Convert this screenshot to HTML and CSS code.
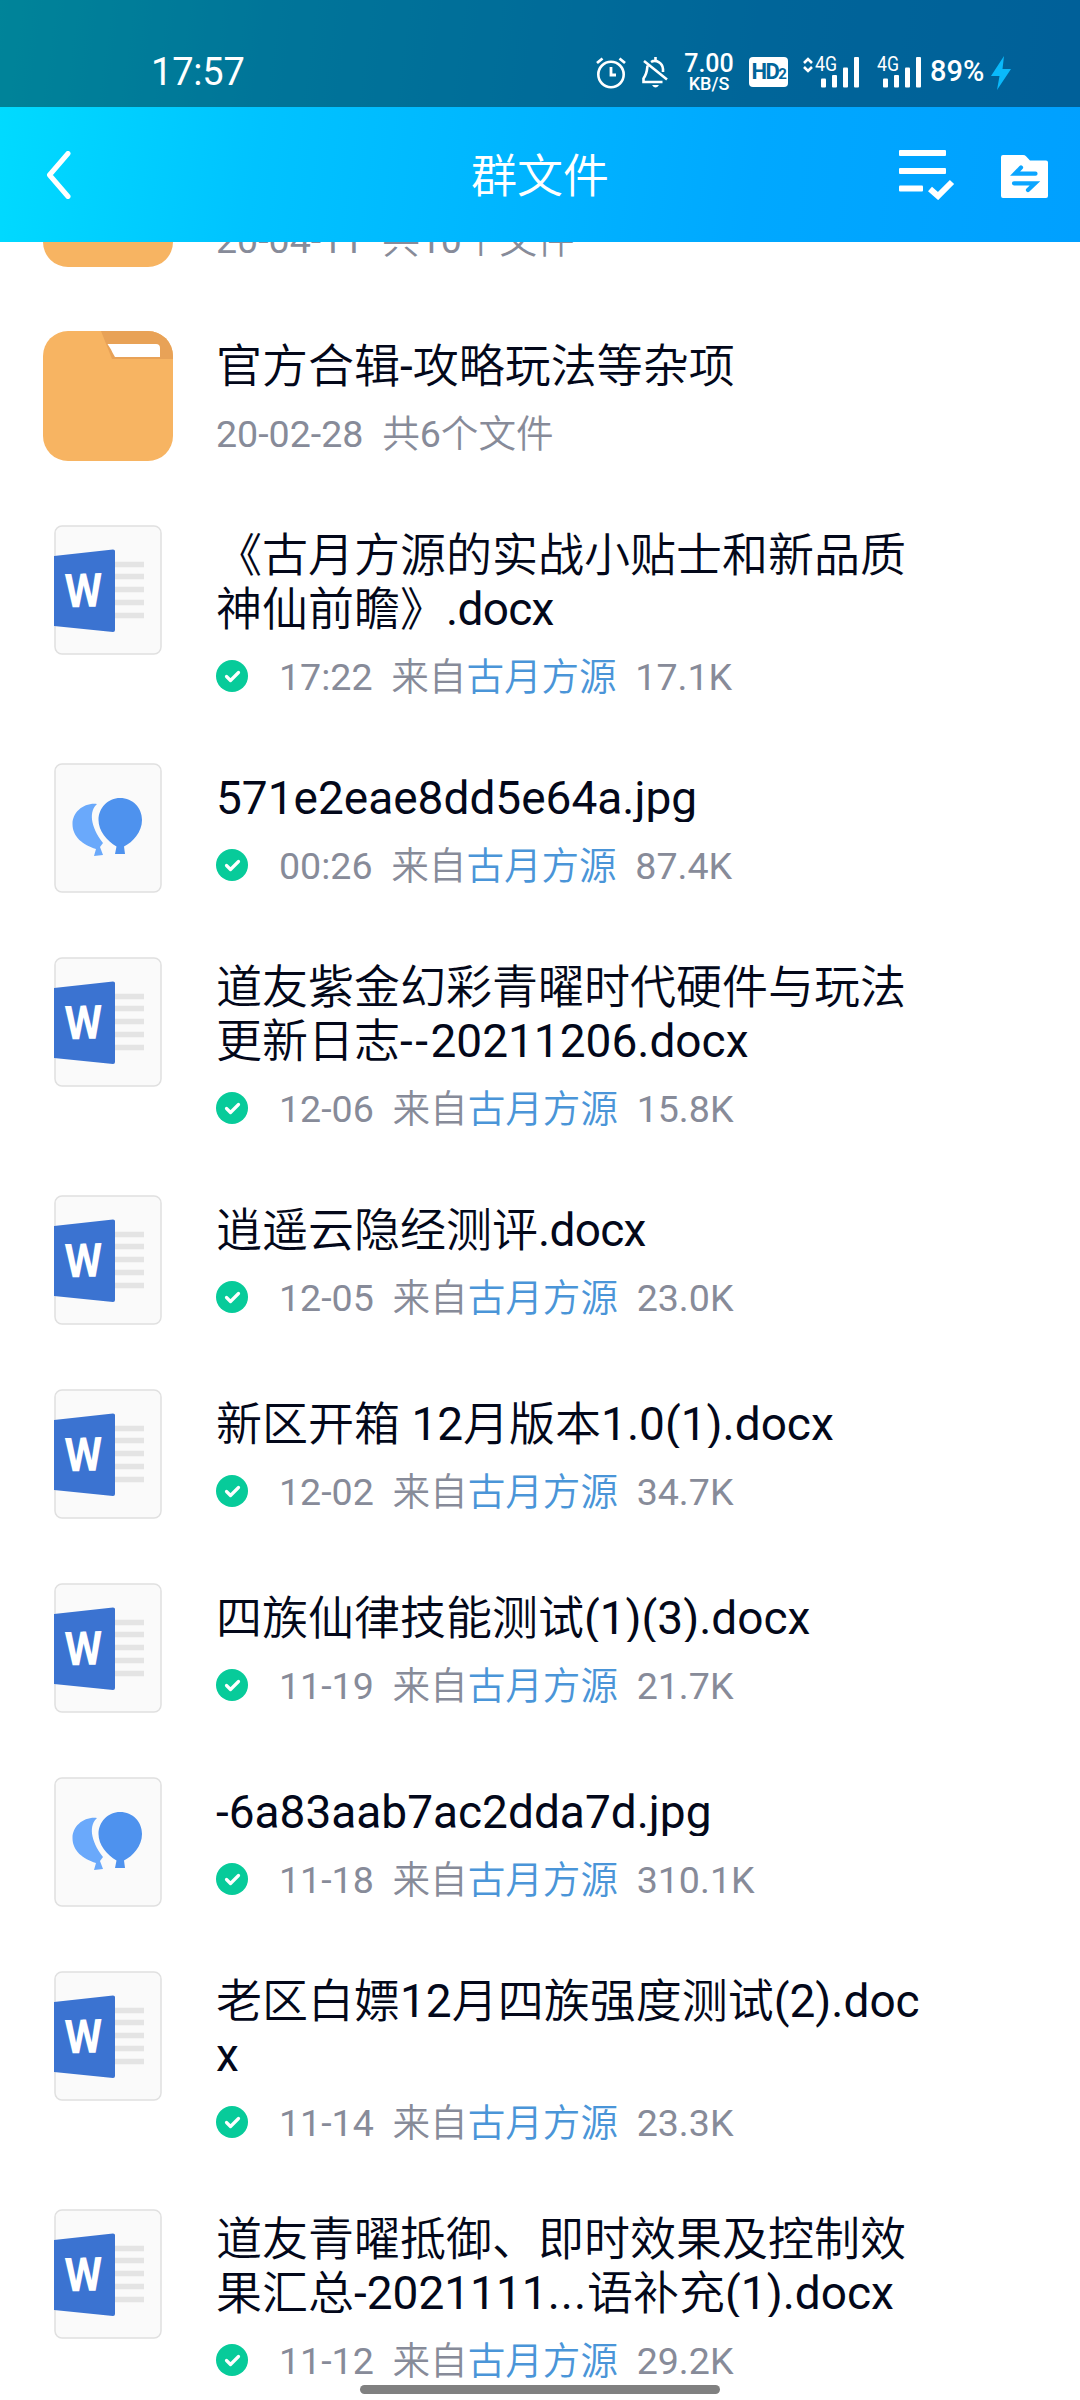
FILE: index.html
```
<!DOCTYPE html>
<html lang="zh-CN">
<head>
<meta charset="utf-8">
<title>群文件</title>
<link rel="stylesheet" href="styles.css">
</head>
<body>
<svg class="defs" width="0" height="0">
  <symbol id="folder" viewBox="0 0 130 130">
    <rect width="130" height="130" rx="25" fill="#f7b462"/>
    <path d="M58 0H105A25 25 0 0 1 130 25V28H69Z" fill="#e8a257"/>
    <path d="M64.500 13H113Q117 13 117 17V26H72Q69.500 22 68 18.500Z" fill="#fff"/>
  </symbol>
  <symbol id="word" viewBox="0 0 108 130">
    <rect x="1" y="1" width="106" height="128" rx="7" fill="#fafafa" stroke="#e0e0e0" stroke-width="1.500"/>
    <path d="M61 39.500h29M61 51.500h29M61 64.500h29M61 77.500h29M61 90.500h29" stroke="#e4e4e4" stroke-width="5.500"/>
    <path d="M0 31L59 24.500Q61 24.500 61 26V105Q61 107 59 107L0 101Z" fill="#3b73d1"/>
    <text class="w" x="10.500" y="82" textLength="38" lengthAdjust="spacingAndGlyphs" transform="rotate(-1.500 30 65)">W</text>
  </symbol>
  <symbol id="image" viewBox="0 0 108 130">
    <rect x="1" y="1" width="106" height="128" rx="7" fill="#fafafa" stroke="#e0e0e0" stroke-width="1.500"/>
    <path d="M43 41C35 48 36 63 49 80L46 84L49 92L40 93L42 86C29 82 18.500 74 18.500 61C18.500 49 30 39.500 43 41Z" fill="#6aa9fb"/>
    <path d="M66 35C79 35 88 45 88 57C88 69 79 79 70 83.500L71 91H61L62.500 83.500C53 78 44.500 68 44.500 57C44.500 45 54 35 66 35Z" fill="#4e92ee"/>
  </symbol>
  <symbol id="ok" viewBox="0 0 32 32">
    <circle cx="16" cy="16" r="16" fill="#07cb9a"/>
    <path d="M10.500 16.500L14.500 20.500L22.500 12.500" fill="none" stroke="#fff" stroke-width="3.200" stroke-linecap="round" stroke-linejoin="round"/>
  </symbol>
</svg>

<div class="top">
  <div class="status">
    <span class="clock">17:57</span>
    <div class="indicators">
      <svg class="alarm" viewBox="0 0 30 32"><g fill="none" stroke="#fff" stroke-width="2.600"><circle cx="15" cy="17.500" r="12.700"/><path d="M15 10v8h5M1 6L6.500 1.500M29 6L23.500 1.500" stroke-width="2.800"/></g></svg>
      <svg class="bell" viewBox="0 0 26 32"><g fill="none" stroke="#fff" stroke-width="2.600"><path d="M2 4L25 22.500M5.500 8.500C5 14 5 17 1.500 21.500V25H20.500M9 5C14 2 20.500 6 21 12V15M13.500 0V3"/></g><path d="M10 28h7q-3.500 5-7 0z" fill="#fff"/></svg>
      <div class="speed"><span class="rate">7.00</span><span class="unit">KB/S</span></div>
      <div class="hd">HD<span class="hd-sub">2</span></div>
      <svg class="signal signal-main" viewBox="0 0 56 31"><g fill="none" stroke="#fff" stroke-width="2.600"><path d="M1 6L5 2L9 6M1 10L5 14L9 10"/></g><text x="12" y="14" textLength="22" lengthAdjust="spacingAndGlyphs">4G</text><g fill="#fff"><rect x="18" y="21.500" width="5" height="9" rx="1"/><rect x="29" y="18" width="5" height="12.500" rx="1"/><rect x="40" y="10.500" width="5" height="20" rx="1"/><rect x="51" y="0" width="5" height="30.500" rx="1"/></g></svg>
      <svg class="signal signal-alt" viewBox="0 0 45 31"><text x="1" y="14" textLength="22" lengthAdjust="spacingAndGlyphs">4G</text><g fill="#fff"><rect x="7" y="21.500" width="5" height="9" rx="1"/><rect x="18" y="18" width="5" height="12.500" rx="1"/><rect x="29" y="10.500" width="5" height="20" rx="1"/><rect x="40" y="0" width="5" height="30.500" rx="1"/></g></svg>
      <span class="battery">89%</span>
      <svg class="bolt" viewBox="0 0 20 34"><path d="M13 0L0 20H8.500L6 34L20 13H11.500Z" fill="#0ab9fb"/></svg>
    </div>
  </div>
  <header class="bar">
    <svg class="back" viewBox="0 0 24 48"><path d="M21.500 2.500L3 24L21.500 45.500" fill="none" stroke="#fff" stroke-width="5" stroke-linecap="round" stroke-linejoin="round"/></svg>
    <h1 class="heading">群文件</h1>
    <div class="actions">
      <svg class="select" viewBox="0 0 56 50"><g fill="#fff"><rect width="47" height="6" rx="1"/><rect y="18" width="47" height="6" rx="1"/><rect y="35.500" width="24" height="6" rx="1"/></g><path d="M31 39L39 46L53 32" fill="none" stroke="#fff" stroke-width="6"/></svg>
      <svg class="transfer" viewBox="0 0 47 43"><path d="M2 0H22Q24 0 25 1.200L29 5.500H45Q47 5.500 47 7.500V41Q47 43 45 43H2Q0 43 0 41V2Q0 0 2 0Z" fill="#fff"/><path d="M34.500 18.700H14L20 12.500M13 28.300H34L27 35" fill="none" stroke="#0ba5ff" stroke-width="4.200" stroke-linecap="round"/></svg>
    </div>
  </header>
</div>

<main class="list">
  <div class="row"><svg class="folder"><use href="#folder"/></svg><div class="info"><div class="title">官方合辑</div><div class="meta"><span>20-04-11&nbsp; 共10个文件</span></div></div></div>
  <div class="row"><svg class="folder"><use href="#folder"/></svg><div class="info"><div class="title">官方合辑-攻略玩法等杂项</div><div class="meta"><span>20-02-28&nbsp; 共6个文件</span></div></div></div>
  <div class="row"><svg class="file"><use href="#word"/></svg><div class="info"><div class="title two">《古月方源的实战小贴士和新品质<br>神仙前瞻》<span class="tight">.docx</span></div><div class="meta"><svg class="ok"><use href="#ok"/></svg><span>17:22&nbsp; 来自<a class="from">古月方源</a>&nbsp; 17.1K</span></div></div></div>
  <div class="row"><svg class="file"><use href="#image"/></svg><div class="info"><div class="title">571e2eae8dd5e64a.jpg</div><div class="meta"><svg class="ok"><use href="#ok"/></svg><span>00:26&nbsp; 来自<a class="from">古月方源</a>&nbsp; 87.4K</span></div></div></div>
  <div class="row"><svg class="file"><use href="#word"/></svg><div class="info"><div class="title two">道友紫金幻彩青曜时代硬件与玩法<br>更新日志<span class="dashes">--</span>20211206.docx</div><div class="meta"><svg class="ok"><use href="#ok"/></svg><span>12-06&nbsp; 来自<a class="from">古月方源</a>&nbsp; 15.8K</span></div></div></div>
  <div class="row"><svg class="file"><use href="#word"/></svg><div class="info"><div class="title">逍遥云隐经测评<span class="tight">.docx</span></div><div class="meta"><svg class="ok"><use href="#ok"/></svg><span>12-05&nbsp; 来自<a class="from">古月方源</a>&nbsp; 23.0K</span></div></div></div>
  <div class="row"><svg class="file"><use href="#word"/></svg><div class="info"><div class="title">新区开箱 12月版本1.0(1).docx</div><div class="meta"><svg class="ok"><use href="#ok"/></svg><span>12-02&nbsp; 来自<a class="from">古月方源</a>&nbsp; 34.7K</span></div></div></div>
  <div class="row"><svg class="file"><use href="#word"/></svg><div class="info"><div class="title">四族仙律技能测试(1)(3).docx</div><div class="meta"><svg class="ok"><use href="#ok"/></svg><span>11-19&nbsp; 来自<a class="from">古月方源</a>&nbsp; 21.7K</span></div></div></div>
  <div class="row"><svg class="file"><use href="#image"/></svg><div class="info"><div class="title">-6a83aab7ac2dda7d.jpg</div><div class="meta"><svg class="ok"><use href="#ok"/></svg><span>11-18&nbsp; 来自<a class="from">古月方源</a>&nbsp; 310.1K</span></div></div></div>
  <div class="row"><svg class="file"><use href="#word"/></svg><div class="info"><div class="title two">老区白嫖12月四族强度测试(2).doc<br>x</div><div class="meta"><svg class="ok"><use href="#ok"/></svg><span>11-14&nbsp; 来自<a class="from">古月方源</a>&nbsp; 23.3K</span></div></div></div>
  <div class="row"><svg class="file"><use href="#word"/></svg><div class="info"><div class="title two">道友青曜抵御、即时效果及控制效<br>果汇总-2021111<span class="dots">...</span>语补充(1).docx</div><div class="meta"><svg class="ok"><use href="#ok"/></svg><span>11-12&nbsp; 来自<a class="from">古月方源</a>&nbsp; 29.2K</span></div></div></div>
</main>
<div class="home"></div>
</body>
</html>
```
FILE: styles.css
```
* { box-sizing: border-box; }
body {
  margin: 0;
  width: 1080px;
  height: 2400px;
  overflow: hidden;
  position: relative;
  background: #fff;
  display: flex;
  flex-direction: column;
  font-family: Roboto, "Noto Sans CJK SC DemiLight", "Noto Sans CJK SC", sans-serif;
  font-weight: 400;
}
svg { display: block; flex: none; }
.defs { position: absolute; }

.top {
  flex: none;
  height: 242px;
  background: linear-gradient(98deg, #00dcff 0%, #00c3ff 25%, #00a8ff 70%, #00a0ff 100%);
}
.status {
  height: 107px;
  padding: 0 69px 0 151px;
  display: flex;
  justify-content: space-between;
  align-items: flex-start;
  background: rgba(0, 0, 0, 0.4);
  color: #fff;
}
.clock { margin-top: 49px; font-size: 38px; line-height: 46px; letter-spacing: -0.2px; }
.indicators { display: flex; align-items: flex-start; height: 107px; }
.alarm { width: 30px; height: 32px; margin-top: 57px; }
.bell { width: 26px; height: 32px; margin: 57px 0 0 16px; }
.speed { width: 52px; margin: 51px 0 0 15px; text-align: center; font-weight: 500; }
.rate, .unit { display: block; }
.rate { font-size: 25px; line-height: 26px; }
.unit { font-size: 18px; line-height: 14px; }
.hd {
  width: 39px; height: 30px; margin: 57px 0 0 14px;
  border-radius: 4px; background: #fff; color: #01659a;
  font-size: 22px; line-height: 30px; font-weight: 700; text-align: center; letter-spacing: -1.5px;
}
.hd-sub { font-size: 15px; }
.signal { height: 31px; margin-top: 57px; overflow: visible; }
.signal text { font-size: 20px; fill: #fff; }
.signal-main { width: 56px; margin-left: 15px; }
.signal-alt { width: 45px; margin-left: 17px; }
.battery { margin: 54px 0 0 9px; font-size: 29px; line-height: 34px; font-weight: 500; width: 56px; white-space: nowrap; }
.bolt { width: 20px; height: 34px; margin: 56px 0 0 5px; }

.bar {
  height: 135px;
  padding: 0 32px 0 46px;
  display: grid;
  grid-template-columns: 1fr auto 1fr;
  align-items: center;
  color: #fff;
}
.back { width: 25px; height: 48px; }
.heading { margin: 2px 0 0; font-size: 46px; line-height: 60px; font-weight: 400; transform: translateX(-7px); }
.actions { display: flex; justify-content: flex-end; align-items: flex-start; height: 50px; }
.select { width: 56px; height: 50px; }
.transfer { width: 47px; height: 43px; margin: 5px 0 0 46px; }

.w { font-size: 47px; font-weight: 700; fill: #fff; }

.list { margin-top: -137px; position: relative; z-index: -1; }
.row { display: flex; padding: 32px 0; min-height: 194px; }
.folder { width: 130px; height: 130px; margin: 0 43px; }
.file { width: 108px; height: 130px; margin: 0 54px; }
.info { width: 720px; }
.title {
  height: 54px;
  margin-top: 5px;
  padding-top: 3px;
  overflow: hidden;
  white-space: nowrap;
  font-size: 46px;
  line-height: 54px;
  color: #03081a;
}
.title.two { height: 108px; margin-top: 0; }
.tight { letter-spacing: -0.7px; }
.dashes { letter-spacing: 2.500px; }
.dots { letter-spacing: 1px; }
.meta {
  display: flex;
  align-items: center;
  gap: 31px;
  height: 46px;
  margin-top: 20px;
  font-size: 37.600px;
  line-height: 46px;
  color: #878b99;
  white-space: nowrap;
}
.meta span { padding-top: 2px; }
.ok { width: 32px; height: 32px; }
.from { color: #4a95d8; }
.home {
  position: absolute; left: 360px; top: 2385px;
  width: 360px; height: 9px; border-radius: 5px; background: #808080;
}
```
